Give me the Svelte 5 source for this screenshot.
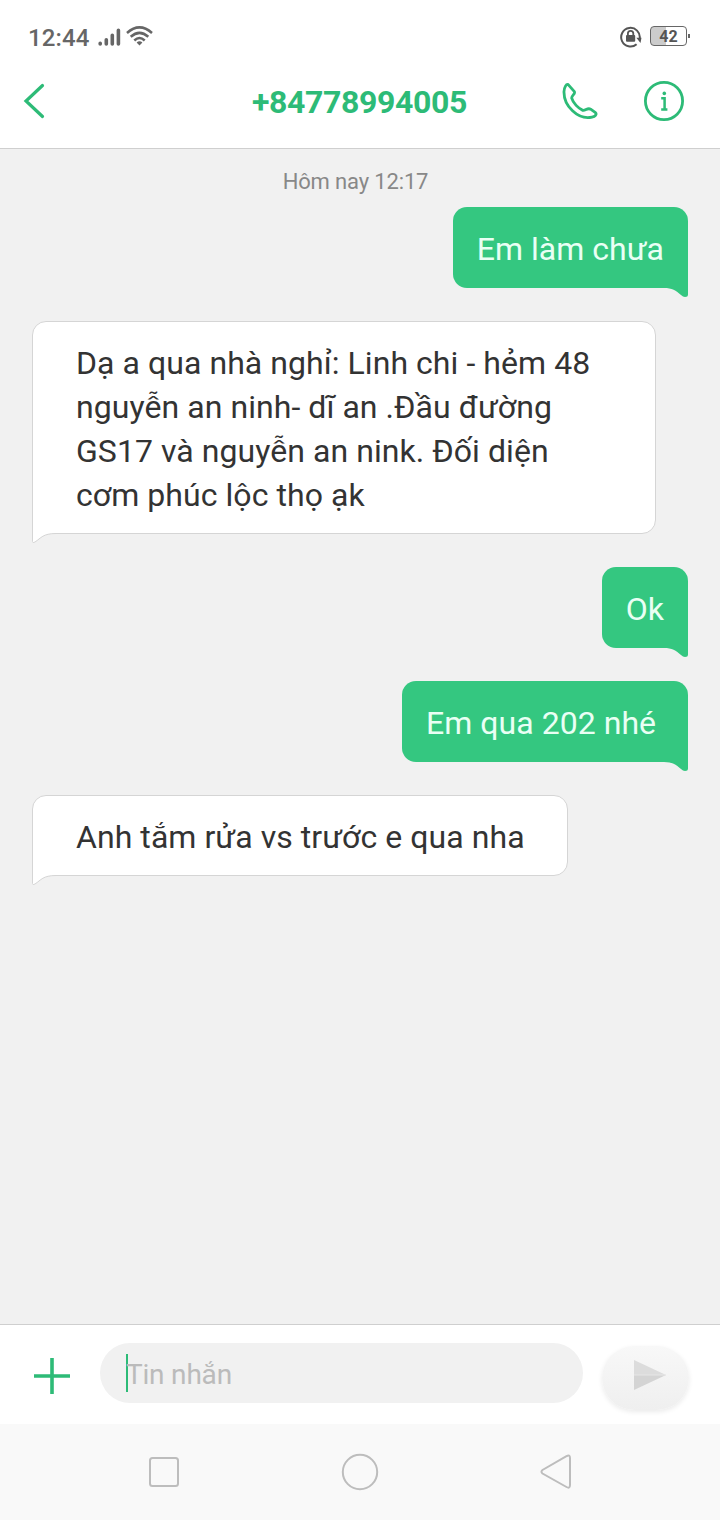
<script>
	const phone = '+84778994005';

	const messages = [
		{ sent: true, text: 'Em làm chưa' },
		{ sent: false, text: 'Dạ a qua nhà nghỉ: Linh chi - hẻm 48 nguyễn an ninh- dĩ an .Đầu đường GS17 và nguyễn an nink. Đối diện cơm phúc lộc thọ ạk' },
		{ sent: true, text: 'Ok' },
		{ sent: true, text: 'Em qua 202 nhé\u00a0' },
		{ sent: false, text: 'Anh tắm rửa vs trước e qua nha' }
	];
</script>

<div class="screen">
	<div class="status">
		<span class="clock">12:44</span>
		<svg class="signal" width="23" height="19" viewBox="0 0 23 19">
			<g stroke="#666" stroke-width="3.6" stroke-linecap="round">
				<path d="M2.2 15.3v.7M8.3 11.7v4.3M14.3 7.3V16M20.4 2.3V16" />
			</g>
		</svg>
		<svg class="wifi" width="27" height="20" viewBox="0 0 27 20">
			<g fill="none" stroke="#666" stroke-width="2.5">
				<path d="M1 7Q13.500-4.200 26 7" />
				<path d="M4.700 10.800Q13.500 3 22.300 10.800" />
				<path d="M8.300 14.500Q13.500 9.600 18.700 14.500" />
			</g>
			<path d="M10.600 16.600Q13.500 14 16.400 16.600L13.500 19.500z" fill="#666" />
		</svg>
		<svg class="lock" width="22" height="22" viewBox="0 0 22 22">
			<path d="M16.600 18.200A9.300 9.300 0 1 1 19.700 12.500" fill="none" stroke="#555" stroke-width="2" />
			<path d="M16.300 11.700h5.200l-1 5.400z" fill="#555" />
			<rect x="6" y="9" width="9.200" height="6.700" rx="1" fill="#555" />
			<path d="M7.900 9.500V7.500a2.700 2.700 0 0 1 5.400 0v2" fill="none" stroke="#555" stroke-width="1.800" />
		</svg>
		<div class="battery"><span>42</span></div>
		<i class="cap"></i>
	</div>

	<header>
		<svg class="back" width="24" height="38" viewBox="0 0 24 38">
			<path d="M20.500 3.500L4 19L20.500 34.500" fill="none" stroke="#2dbb77" stroke-width="3.200" stroke-linecap="round" />
		</svg>
		<h1>{phone}</h1>
		<svg class="call" width="36" height="38" viewBox="0 0 36 38">
			<path d="M6.200 2.600C4.300 1.600 2.200 5.400 2 9.500C1.800 16.500 5.400 24 10.500 28.800C16 34 23.500 36.700 30 35.200C33.200 34.500 35 32.300 33.500 30.700L28.600 27.200C25.500 25.300 23.600 28.900 20.800 28.400C16.500 26.500 11 21 9.700 16.200C9.400 13.400 13.600 12 12.400 9.700Z" fill="none" stroke="#2dbb77" stroke-width="2.800" stroke-linejoin="round" />
		</svg>
		<svg class="info" width="42" height="42" viewBox="0 0 42 42">
			<circle cx="21" cy="21" r="18.600" fill="none" stroke="#2dbb77" stroke-width="2.800" />
			<circle cx="21.300" cy="13.400" r="1.800" fill="#2dbb77" />
			<path d="M18.200 18.200H21.600V29M18.200 29.400H24.400" fill="none" stroke="#2dbb77" stroke-width="2.500" />
		</svg>
	</header>

	<main>
		<div class="date">Hôm nay 12:17</div>
		{#each messages as message}
			<div class="bubble" class:sent={message.sent}>
				{message.text}
				{#if message.sent}
					<svg class="tail" width="24" height="10" viewBox="0 0 24 10">
						<path d="M0 0H24V7.500Q24 10 21 10Q19 10 17 8C12 3.500 8 1 0 1z" fill="#34c780" />
					</svg>
				{:else}
					<svg class="tail" width="24" height="11" viewBox="0 0 24 11">
						<path d="M.5 0V8.500Q.5 10.500 3 9C9 5 11 .5 24 .5V0z" fill="#fff" />
						<path d="M.5 0V8.500Q.5 10.500 3 9C9 5 11 .5 24 .5" fill="none" stroke="#d5d5d5" />
					</svg>
				{/if}
			</div>
		{/each}
	</main>

	<footer>
		<svg class="add" width="38" height="38" viewBox="0 0 38 38">
			<path d="M19 1V37M1 19H37" stroke="#2dbb77" stroke-width="3.600" />
		</svg>
		<div class="field"><i class="caret"></i><span>Tin nhắn</span></div>
		<div class="send">
			<svg width="34" height="30" viewBox="0 0 34 30">
				<path d="M1 0L33 15H1z" fill="#dcdcdc" />
				<path d="M1 30L33 15H1z" fill="#d4d4d4" />
				<path d="M1 15H33" stroke="#e6e6e6" />
			</svg>
		</div>
	</footer>

	<nav>
		<svg width="38" height="38" viewBox="0 0 38 38"><rect x="5" y="5" width="28" height="28" rx="2.500" /></svg>
		<svg width="38" height="38" viewBox="0 0 38 38"><circle cx="19" cy="19" r="17.200" /></svg>
		<svg width="38" height="38" viewBox="0 0 38 38"><path d="M29.500 3.200Q33 1.200 33 5V32Q33 36 29.500 34L5.500 20.500Q3.400 18.700 5.500 17z" /></svg>
	</nav>
</div>

<style>
	:global(body) {
		margin: 0;
	}

	.screen {
		display: flex;
		flex-direction: column;
		width: 720px;
		height: 1520px;
		background: #fff;
		font-family: Roboto, sans-serif;
		color: #333;
	}

	.status {
		display: flex;
		align-items: center;
		height: 72px;
		padding: 0 30px 0 28px;
		box-sizing: border-box;
	}

	.clock {
		font-size: 24px;
		font-weight: 500;
		line-height: 28px;
		letter-spacing: .1px;
		color: #666;
		margin-top: 4px;
	}

	.signal {
		margin: 2px 0 0 9px;
	}

	.wifi {
		margin-left: 5px;
	}

	.lock {
		margin: 2px 8px 0 auto;
	}

	.battery {
		width: 37px;
		height: 20px;
		box-sizing: border-box;
		border: solid 1.5px #666;
		border-radius: 4px;
		background: linear-gradient(90deg, #ccc 42%, #fff 42%);
		font-size: 16px;
		font-weight: 700;
		line-height: 19px;
		text-align: center;
		color: #555;
	}

	.cap {
		width: 2px;
		height: 4px;
		margin-left: 1px;
		background: #666;
	}

	header {
		display: flex;
		align-items: center;
		height: 77px;
		padding: 0 35px 19px 22px;
		box-sizing: border-box;
		border-bottom: solid 1px #cfcfcf;
	}

	h1 {
		margin: 3px 0 0 206px;
		width: 217px;
		font-size: 32px;
		font-weight: 700;
		line-height: 38px;
		letter-spacing: -.36px;
		white-space: nowrap;
		color: #2dbb77;
	}

	.call {
		margin-left: 93px;
	}

	.info {
		margin-left: auto;
	}

	main {
		flex: 1;
		display: flex;
		flex-direction: column;
		align-items: flex-start;
		padding: 0 32px;
		background: #f1f1f1;
	}

	.date {
		align-self: center;
		margin: 19px 9px 12px 0;
		font-size: 22px;
		line-height: 27px;
		letter-spacing: -.15px;
		color: #888;
	}

	.bubble {
		position: relative;
		box-sizing: border-box;
		max-width: 624px;
		margin-bottom: 33px;
		padding: 19px 42px 16px 43px;
		border: solid 1px #d5d5d5;
		border-radius: 14px 14px 14px 0;
		background: #fff;
		font-size: 32px;
		line-height: 44px;
		letter-spacing: .06px;
		min-height: 81px;
	}

	.sent {
		align-self: flex-end;
		padding: 20px 24px 17px;
		border: 0;
		border-radius: 14px 14px 0 14px;
		background: #34c780;
		letter-spacing: .03px;
		color: #e9fff4;
	}

	.tail {
		position: absolute;
		left: -1px;
		bottom: -11px;
	}

	.sent .tail {
		left: auto;
		right: 0;
		bottom: -9px;
	}

	footer {
		display: flex;
		align-items: center;
		height: 100px;
		padding: 0 31px 0 33px;
		box-sizing: border-box;
		border-top: solid 1px #cfcfcf;
	}

	.add {
		margin-top: 3px;
	}

	.field {
		display: flex;
		align-items: center;
		width: 483px;
		height: 60px;
		margin: 0 19px 3px 29px;
		padding-left: 26px;
		box-sizing: border-box;
		border-radius: 30px;
		background: #f1f1f1;
		font-size: 28px;
		letter-spacing: -.2px;
		color: #bbb;
	}

	.field span {
		margin-top: 2px;
	}

	.caret {
		width: 2px;
		height: 38px;
		margin-right: -2px;
		background: #2dbb77;
	}

	.send {
		display: flex;
		align-items: center;
		justify-content: center;
		width: 87px;
		height: 64px;
		margin-top: 6px;
		padding: 0 0 5px 8px;
		box-sizing: border-box;
		border-radius: 32px;
		background: linear-gradient(#f8f8f8, #efefef);
		box-shadow: 0 2px 5px #ebebeb;
	}

	nav {
		display: flex;
		justify-content: center;
		align-items: center;
		gap: 158px;
		height: 96px;
		background: #f9f9f9;
	}

	nav svg {
		fill: none;
		stroke: #bdbdbd;
		stroke-width: 2;
	}
</style>
